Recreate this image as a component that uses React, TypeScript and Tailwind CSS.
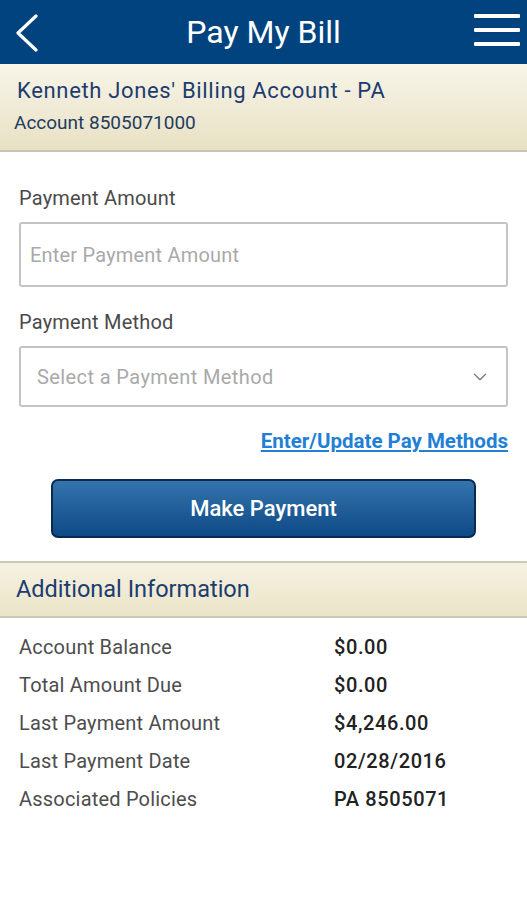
import { ChevronDown } from "lucide-react"

const info = [
  { label: "Account Balance", value: "$0.00" },
  { label: "Total Amount Due", value: "$0.00" },
  { label: "Last Payment Amount", value: "$4,246.00" },
  { label: "Last Payment Date", value: "02/28/2016" },
  { label: "Associated Policies", value: "PA 8505071" },
]

export default function App() {
  return (
    <div className="min-h-[900px] w-[527px] bg-white font-['Roboto','Liberation_Sans',sans-serif]">
      {/* top bar */}
      <header className="relative flex h-16 items-center justify-center bg-[#01437f]">
        <button className="absolute left-[13px] top-[14px]" aria-label="Back">
          <svg width="28" height="38" viewBox="0 0 28 38" fill="none">
            <path d="M23 2 L5 19 L23 36" stroke="white" strokeWidth="3.2" strokeLinecap="round" strokeLinejoin="round" />
          </svg>
        </button>
        <h1 className="text-[32px] leading-10 text-white">Pay My Bill</h1>
        <button className="absolute right-[7px] top-[14px] flex w-[46px] flex-col gap-[10px]" aria-label="Menu">
          <span className="h-1 w-full rounded-[1px] bg-white shadow-[0_0_1px_#0a2b55]" />
          <span className="h-1 w-full rounded-[1px] bg-white shadow-[0_0_1px_#0a2b55]" />
          <span className="h-1 w-full rounded-[1px] bg-white shadow-[0_0_1px_#0a2b55]" />
        </button>
      </header>

      {/* account band */}
      <div className="h-[88px] border-b-2 border-[#c9c4b4] bg-gradient-to-b from-[#f8f5e9] to-[#e8e1c4] px-[14px] pt-[13px]">
        <p className="pl-[3px] text-[22px] leading-7 tracking-[0.03em] text-[#1c3c70]">Kenneth Jones' Billing Account - PA</p>
        <p className="mt-[8px] text-[19px] leading-5 text-[#233c5e]">Account 8505071000</p>
      </div>

      {/* form */}
      <div className="px-[19px] pt-[34px]">
        <label className="block text-[20px] leading-6 tracking-[0.01em] text-[#4a4a4a]">Payment Amount</label>
        <div className="mt-[12px] flex h-[65px] items-center rounded-[3px] border-2 border-[#c4c4c4] px-[9px]">
          <span className="text-[20px] tracking-[0.01em] text-[#a9a9a9]">Enter Payment Amount</span>
        </div>

        <label className="mt-[23px] block text-[20px] leading-6 tracking-[0.01em] text-[#4a4a4a]">Payment Method</label>
        <div className="mt-[12px] flex h-[61px] items-center justify-between rounded-[3px] border-2 border-[#c4c4c4] pl-[16px] pr-[15px]">
          <span className="text-[20px] tracking-[0.02em] text-[#a9a9a9]">Select a Payment Method</span>
          <ChevronDown className="h-[22px] w-[22px] text-[#777]" strokeWidth={1.4} />
        </div>

        <div className="mt-[22px] flex justify-end">
          <a className="text-[20.5px] leading-6 font-bold text-[#1f80d6] underline underline-offset-2">Enter/Update Pay Methods</a>
        </div>

        <div className="mt-[26px] flex justify-center">
          <button className="h-[59px] w-[425px] rounded-[7px] border-2 border-[#0b2a50] bg-gradient-to-b from-[#3474ad] to-[#0d4a86] text-[22px] font-medium text-white">
            Make Payment
          </button>
        </div>
      </div>

      {/* additional information */}
      <div className="mt-[23px] flex h-[57px] items-center border-y-2 border-[#cbc7b9] bg-gradient-to-b from-[#f6f2e2] to-[#ebe4c8] px-[16px]">
        <h2 className="text-[23.5px] text-[#1c3c70]">Additional Information</h2>
      </div>

      <div className="px-[19px] pt-[10px]">
        {info.map((row) => (
          <div key={row.label} className="flex h-[38px] items-center">
            <span className="w-[315px] text-[20px] tracking-[0.01em] text-[#4d4d4d]">{row.label}</span>
            <span className="text-[20px] font-medium tracking-[0.03em] text-[#222]">{row.value}</span>
          </div>
        ))}
      </div>
    </div>
  )
}
